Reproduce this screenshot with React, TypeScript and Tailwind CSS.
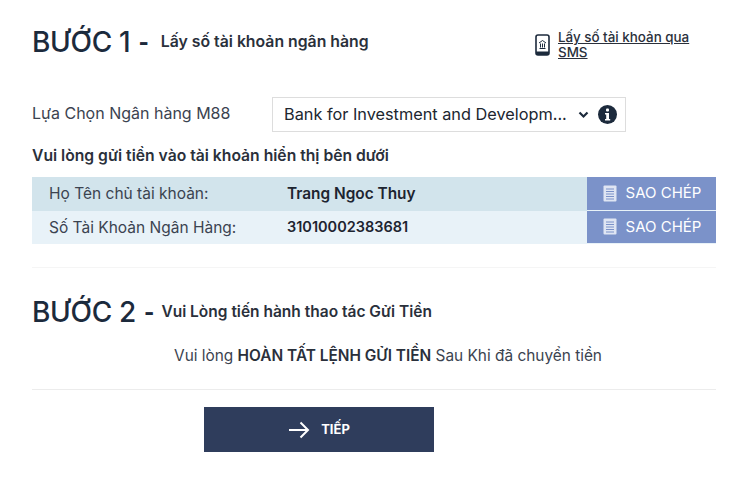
import React from "react";

function CopyIcon() {
  return (
    <svg width="14" height="17" viewBox="0 0 14 17" className="shrink-0">
      <rect x="0.5" y="0.5" width="13" height="16" rx="1" fill="#dfe5f3" />
      <path d="M3 4h8M3 6.5h8M3 9h8M3 11.5h8M3 14h8" stroke="#7b92c9" strokeWidth="1" />
    </svg>
  );
}

function Row({ label, value, tone, valueSize }: { label: string; value: string; tone: string; valueSize: string }) {
  return (
    <div className={`flex h-[33.5px] items-center ${tone}`}>
      <div className="w-[255px] pl-[17px] text-[15.5px] text-[#3b4350]">{label}</div>
      <div className={`flex-1 font-semibold text-[#1d2430] ${valueSize}`}>{value}</div>
      <button className="flex h-full w-[129px] items-center justify-center gap-[9px] border-b border-[#e8f2f8] bg-[#7b92c9] pl-[1px] text-[15px] text-white">
        <CopyIcon />
        SAO CHÉP
      </button>
    </div>
  );
}

function StepTitle({ step }: { step: string }) {
  return (
    <div className="flex items-center">
      <span className="text-[28px] font-medium leading-[36px] tracking-[-0.3px] text-[#1c2a3c]">{step}</span>
      <span className="ml-[8px] text-[22px] font-extrabold leading-none text-[#1c2a3c]">-</span>
    </div>
  );
}

export default function App() {
  return (
    <div className="h-[482px] w-[750px] bg-white pl-[32px] pr-[34px] text-[#1d2430] [font-family:Inter,'Liberation_Sans',sans-serif]">
      <div className="flex h-[97px] items-start pt-[24px]">
        <div className="flex items-center">
          <StepTitle step="BƯỚC 1" />
          <span className="ml-[12px] text-[15.8px] font-semibold text-[#2a303b]">Lấy số tài khoản ngân hàng</span>
        </div>
        <a className="ml-auto mr-[26px] mt-[6px] flex w-[155px] items-center gap-[8px]">
          <svg width="15" height="22" viewBox="0 0 15 22" className="shrink-0">
            <rect x="1" y="1" width="13" height="20" rx="2" fill="#fff" stroke="#1c2a3c" strokeWidth="1.6" />
            <rect x="1" y="17.5" width="13" height="3.5" fill="#1c2a3c" />
            <path d="M4 9l3.5-2.5L11 9M4.5 14.5h6M5.5 9.5v4M7.5 9.5v4M9.5 9.5v4" stroke="#1c2a3c" strokeWidth="1" fill="none" />
          </svg>
          <span className="text-[13.4px] font-medium leading-[15px] text-[#2a303b] underline">
            Lấy số tài khoản qua SMS
          </span>
        </a>
      </div>

      <div className="flex items-center">
        <div className="mb-[3px] w-[240px] text-[16px] text-[#3b4350]">Lựa Chọn Ngân hàng M88</div>
        <div className="flex h-[35px] w-[354px] items-center border border-[#dddddd] pl-[11px] pr-[8px]">
          <span className="flex-1 whitespace-nowrap text-[16.3px] text-[#20262f]">Bank for Investment and Developm...</span>
          <svg width="11" height="8" viewBox="0 0 11 8" className="mr-[9px]">
            <path d="M1.5 1.5L5.5 5.5L9.5 1.5" stroke="#1c2a3c" strokeWidth="2.2" fill="none" />
          </svg>
          <svg width="19" height="19" viewBox="0 0 19 19">
            <circle cx="9.5" cy="9.5" r="9.5" fill="#1c2a3c" />
            <rect x="8" y="3.5" width="3" height="3" rx="1" fill="#fff" />
            <path d="M7 8h4v6h1.2v1.5H7V14h1.2V9.5H7z" fill="#fff" />
          </svg>
        </div>
      </div>

      <div className="mt-[13px] text-[15.7px] font-semibold leading-[22px] text-[#2a303b]">
        Vui lòng gửi tiền vào tài khoản hiển thị bên dưới
      </div>

      <div className="mt-[10px]">
        <Row label="Họ Tên chủ tài khoản:" value="Trang Ngoc Thuy" tone="bg-[#d2e4ec]" valueSize="text-[15.4px]" />
        <Row label="Số Tài Khoản Ngân Hàng:" value="31010002383681" tone="bg-[#e8f2f8]" valueSize="text-[14.5px]" />
      </div>

      <div className="mt-[23px] border-t border-[#f5f5f5]" />

      <div className="mt-[26px] flex items-center">
        <StepTitle step="BƯỚC 2" />
        <span className="ml-[7px] text-[15.5px] font-semibold text-[#2a303b]">Vui Lòng tiến hành thao tác Gửi Tiền</span>
      </div>

      <div className="mt-[15px] pl-[28px] text-center text-[15.4px] leading-[22px] text-[#3b4350]">
        Vui lòng <b className="font-semibold text-[#2a303b]">HOÀN TẤT LỆNH GỬI TIỀN</b> Sau Khi đã chuyển tiền
      </div>

      <div className="mt-[22px] border-t border-[#ececec]" />

      <button className="ml-[172px] mt-[17px] flex h-[45px] w-[230px] items-center justify-center gap-[11px] bg-[#2f3d5c] text-[13px] font-bold text-white">
        <svg width="22" height="18" viewBox="0 0 22 18">
          <path d="M1 9h19M12.5 1.5L20 9l-7.5 7.5" stroke="#fff" strokeWidth="2" fill="none" />
        </svg>
        TIẾP
      </button>
    </div>
  );
}
